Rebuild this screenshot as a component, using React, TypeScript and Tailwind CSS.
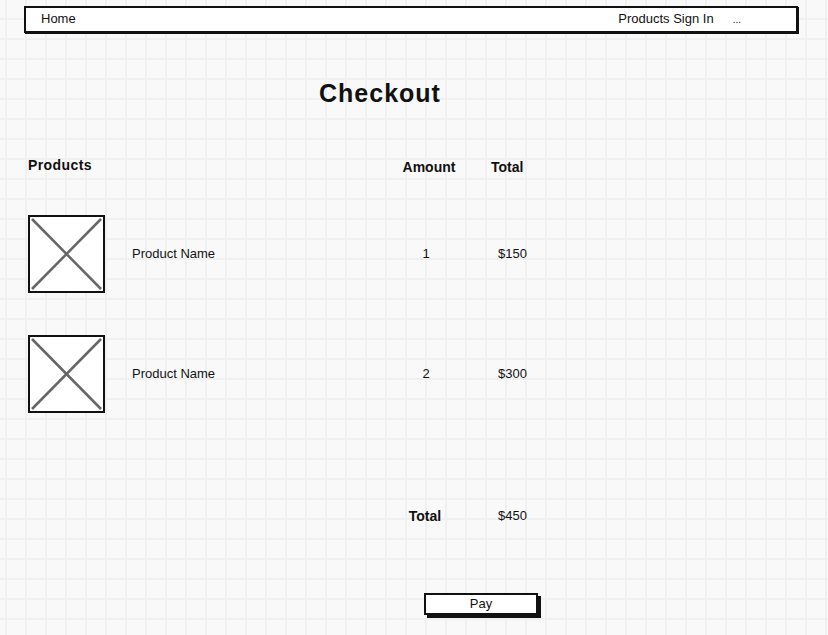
import React from 'react';

type Item = { name: string; amount: number; total: string };

const items: Item[] = [
  { name: 'Product Name', amount: 1, total: '$150' },
  { name: 'Product Name', amount: 2, total: '$300' },
];

function ImagePlaceholder() {
  return (
    <div className="w-[77px] h-[78px] border-2 border-[#111] bg-white">
      <svg viewBox="0 0 73 74" className="w-full h-full block" preserveAspectRatio="none">
        <line x1="2" y1="2" x2="71" y2="72" stroke="#666" strokeWidth="2.5" />
        <line x1="71" y1="2" x2="2" y2="72" stroke="#666" strokeWidth="2.5" />
      </svg>
    </div>
  );
}

function ProductRow({ item, className }: { item: Item; className?: string }) {
  return (
    <div className={`flex items-center h-[78px] pl-[28px] ${className ?? ''}`}>
      <div className="w-[104px]">
        <ImagePlaceholder />
      </div>
      <div className="w-[246px] text-[13px]">{item.name}</div>
      <div className="w-[96px] text-center text-[13px]">{item.amount}</div>
      <div className="pl-[24px] text-[13px]">{item.total}</div>
    </div>
  );
}

export default function App() {
  return (
    <div
      className="w-full h-[635px] overflow-hidden bg-[#f9f9f9] bg-[linear-gradient(to_right,#f0f0f0_2px,transparent_2px),linear-gradient(to_bottom,#f0f0f0_2px,transparent_2px)] bg-[size:20px_20px] bg-[position:5px_18px] text-[#111] pt-[6px]"
      style={{ fontFamily: '"Liberation Sans", Arial, sans-serif' }}
    >
      {/* top nav */}
      <div className="ml-[24px] w-[774px] h-[27px] border-2 border-[#111] shadow-[1px_1px_0_#111] bg-white flex items-center justify-between pl-[15px] pr-[55px] pb-[2px] text-[13px]">
        <span>Home</span>
        <div className="flex items-center gap-[19px]">
          <span>Products Sign In</span>
          <span className="text-[10px] pt-[2px]">...</span>
        </div>
      </div>

      <h1 className="mt-[45px] ml-[319px] h-[30px] leading-[30px] text-[25px] font-bold tracking-[1px]">
        Checkout
      </h1>

      {/* column headers */}
      <div className="mt-[47px] flex h-[20px] pl-[28px] text-[14px] font-bold leading-[20px]">
        <div className="w-[350px] tracking-[0.4px]">Products</div>
        <div className="w-[102px] text-center pt-[2px]">Amount</div>
        <div className="pl-[11px] pt-[2px]">Total</div>
      </div>

      <ProductRow item={items[0]} className="mt-[40px]" />
      <ProductRow item={items[1]} className="mt-[42px]" />

      {/* grand total */}
      <div className="mt-[93px] flex items-center h-[20px] pl-[376px]">
        <div className="w-[98px] text-center text-[14px] font-bold">Total</div>
        <div className="pl-[24px] text-[13px]">$450</div>
      </div>

      <div className="mt-[65px] ml-[424px]">
        <button className="w-[114px] h-[22px] border-2 border-[#111] bg-white shadow-[3px_3px_0_#111] text-[13px] leading-none pb-[1px]">
          Pay
        </button>
      </div>
    </div>
  );
}
